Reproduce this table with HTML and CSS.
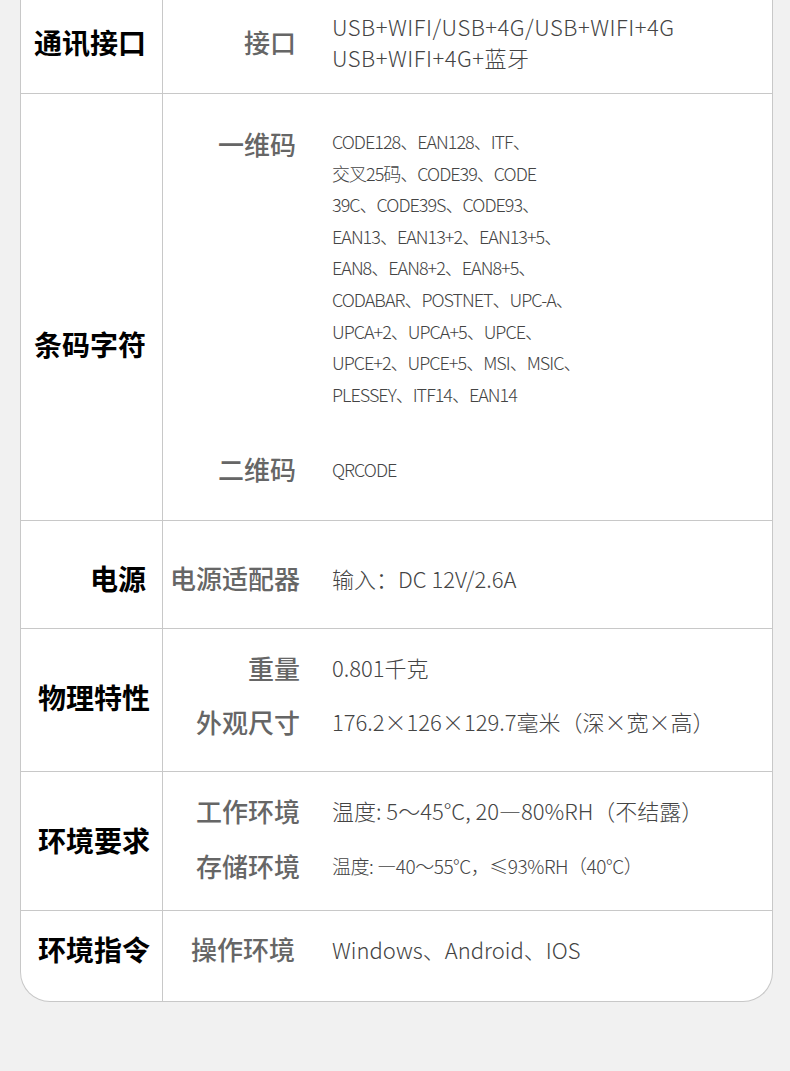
FILE: index.html
```html
<!DOCTYPE html>
<html lang="zh-CN">
<head>
<meta charset="utf-8">
<title>规格参数</title>
<link rel="stylesheet" href="styles.css">
</head>
<body>
<div class="card">
  <div class="row r1">
    <div class="cat">通讯接口</div>
    <div class="specs">
      <div class="item">
        <div class="key">接口</div>
        <div class="val val-wide">USB+WIFI/USB+4G/USB+WIFI+4G<br>USB+WIFI+4G+蓝牙</div>
      </div>
    </div>
  </div>

  <div class="row r2">
    <div class="cat">条码字符</div>
    <div class="specs">
      <div class="item item-top">
        <div class="key">一维码</div>
        <div class="val val-list">CODE128、EAN128、ITF、<br>交叉25码、CODE39、CODE<br>39C、CODE39S、CODE93、<br>EAN13、EAN13+2、EAN13+5、<br>EAN8、EAN8+2、EAN8+5、<br>CODABAR、POSTNET、UPC-A、<br>UPCA+2、UPCA+5、UPCE、<br>UPCE+2、UPCE+5、MSI、MSIC、<br>PLESSEY、ITF14、EAN14</div>
      </div>
      <div class="item item-qr">
        <div class="key">二维码</div>
        <div class="val val-list">QRCODE</div>
      </div>
    </div>
  </div>

  <div class="row r3">
    <div class="cat">电源</div>
    <div class="specs">
      <div class="item">
        <div class="key">电源适配器</div>
        <div class="val">输入：DC 12V/2.6A</div>
      </div>
    </div>
  </div>

  <div class="row r4">
    <div class="cat">物理特性</div>
    <div class="specs">
      <div class="item">
        <div class="key">重量</div>
        <div class="val">0.801千克</div>
      </div>
      <div class="item">
        <div class="key">外观尺寸</div>
        <div class="val">176.2×126×129.7毫米（深×宽×高）</div>
      </div>
    </div>
  </div>

  <div class="row r5">
    <div class="cat">环境要求</div>
    <div class="specs">
      <div class="item">
        <div class="key">工作环境</div>
        <div class="val">温度: 5～45°C, 20—80%RH（不结露）</div>
      </div>
      <div class="item">
        <div class="key">存储环境</div>
        <div class="val val-sm">温度: —40～55°C，≤93%RH（40°C）</div>
      </div>
    </div>
  </div>

  <div class="row r6">
    <div class="cat">环境指令</div>
    <div class="specs">
      <div class="item">
        <div class="key">操作环境</div>
        <div class="val">Windows、Android、IOS</div>
      </div>
    </div>
  </div>
</div>
</body>
</html>
```

FILE: styles.css
```css
html, body {
  margin: 0;
  padding: 0;
  background: #f1f1f1;
}

body {
  font-family: "Noto Sans CJK SC", "Noto Sans", sans-serif;
  height: 1071px;
}

.card {
  margin-left: 20px;
  width: 753px;
  box-sizing: border-box;
  background: #ffffff;
  border: 1px solid #c8c8c8;
  border-top: none;
  border-radius: 0 0 30px 30px;
  overflow: hidden;
}

.row {
  display: grid;
  grid-template-columns: 141px 1fr;
  box-sizing: border-box;
  border-bottom: 1px solid #c8c8c8;
}

.row:last-child {
  border-bottom: none;
}

.cat {
  display: flex;
  align-items: center;
  justify-content: flex-end;
  padding-right: 12px;
  font-size: 28px;
  font-weight: 700;
  line-height: 32px;
  color: #000000;
}

.specs {
  border-left: 1px solid #c8c8c8;
  display: flex;
  flex-direction: column;
  justify-content: center;
}

.item {
  display: grid;
  grid-template-columns: 137px 1fr;
  column-gap: 32px;
  align-items: center;
}

.key {
  text-align: right;
  font-size: 26px;
  font-weight: 500;
  line-height: 32px;
  color: #666666;
}

.val {
  font-size: 22px;
  font-weight: 300;
  line-height: 31px;
  color: #444444;
}

.val-wide {
  letter-spacing: 0.5px;
}

.val-list {
  font-size: 18px;
  letter-spacing: -1px;
  line-height: 31.6px;
}

.val-sm {
  font-size: 19px;
  letter-spacing: -0.45px;
}

/* row heights */
.r1 { height: 94px; }
.r1 .cat, .r1 .specs { padding-bottom: 10px; }
.r1 .cat, .r2 .cat, .r3 .cat { padding-right: 16px; }
.r1 .key, .r2 .key { padding-right: 4px; }

.r2 { height: 427px; }
.r2 .cat { align-items: flex-start; padding-top: 234px; }
.r2 .specs { justify-content: flex-start; padding-top: 32px; }
.item-top { align-items: start; }
.item-top .key { margin-top: 2px; }
.item-qr { margin-top: 42px; }
.item-qr .val { padding-top: 2px; }

.r3 { height: 108px; }
.r3 .cat, .r3 .specs { padding-top: 7px; }

.r4 { height: 143px; }
.r4 .specs { gap: 22px; padding-bottom: 11px; }
.r4 .cat { padding-bottom: 6px; }

.r5 { height: 139px; }
.r5 .specs { gap: 23px; padding-bottom: 6px; }
.r5 .cat { padding-bottom: 3px; }

.r6 { height: 90px; }
.r6 .cat, .r6 .specs { padding-bottom: 14px; }
.r6 .key { padding-right: 5px; }
```
